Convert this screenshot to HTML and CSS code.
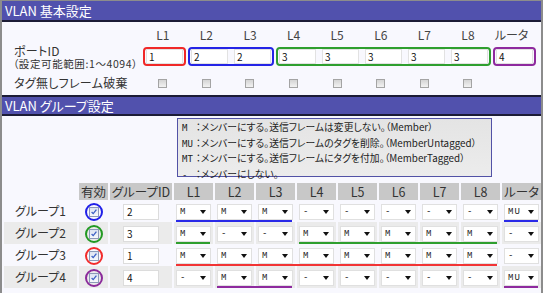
FILE: index.html
```html
<!DOCTYPE html>
<html lang="ja">
<head>
    <meta charset="UTF-8">
    <meta name="viewport" content="width=device-width, initial-scale=1.0">
    <title>VLAN設定</title>
    <link rel="stylesheet" href="styles.css">
</head>
<body>
    <div class="frame">
        <div class="bar">VLAN 基本設定</div>
        <div class="basic">
            <div></div>
            <div class="lbl">L1</div>
            <div class="lbl">L2</div>
            <div class="lbl">L3</div>
            <div class="lbl">L4</div>
            <div class="lbl">L5</div>
            <div class="lbl">L6</div>
            <div class="lbl">L7</div>
            <div class="lbl">L8</div>
            <div class="lbl">ルータ</div>

            <div class="name">ポートID<small>（設定可能範囲:1～4094）</small></div>
            <div class="ports">
                <div class="grp red"><span class="inp">1</span></div>
                <div class="grp blue"><span class="inp">2</span><span class="inp">2</span></div>
                <div class="grp green"><span class="inp">3</span><span class="inp">3</span><span class="inp">3</span><span class="inp">3</span><span class="inp">3</span></div>
                <div class="grp purple"><span class="inp">4</span></div>
            </div>

            <div class="name tag">タグ無しフレーム破棄</div>
            <span class="cb"></span>
            <span class="cb"></span>
            <span class="cb"></span>
            <span class="cb"></span>
            <span class="cb"></span>
            <span class="cb"></span>
            <span class="cb"></span>
            <span class="cb"></span>
            <span></span>
        </div>

        <div class="bar bar2">VLAN グループ設定</div>
        <div class="groups">
            <div class="legend">
                <div><span class="k">M</span>：メンバーにする。送信フレームは変更しない。（Member）</div>
                <div><span class="k">MU</span>：メンバーにする。送信フレームのタグを削除。（MemberUntagged）</div>
                <div><span class="k">MT</span>：メンバーにする。送信フレームにタグを付加。（MemberTagged）</div>
                <div><span class="k">-</span>：メンバーにしない。</div>
            </div>

            <div class="r head">
                <div class="c blank"></div>
                <div class="c">有効</div>
                <div class="c">グループID</div>
                <div class="c">L1</div>
                <div class="c">L2</div>
                <div class="c">L3</div>
                <div class="c">L4</div>
                <div class="c">L5</div>
                <div class="c">L6</div>
                <div class="c">L7</div>
                <div class="c">L8</div>
                <div class="c">ルータ</div>
            </div>

            <!-- グループ1 -->
            <div class="r">
                <div class="c gname">グループ1</div>
                <div class="c"><span class="ring blue"><span class="ck"><svg viewBox="0 0 10 10"><path d="M2 5l2 2 4-5"/></svg></span></span></div>
                <div class="c"><span class="gid">2</span></div>
                <div class="c"><span class="sel">M</span></div>
                <div class="c"><span class="sel">M</span></div>
                <div class="c"><span class="sel">M</span></div>
                <div class="c"><span class="sel">-</span></div>
                <div class="c"><span class="sel">-</span></div>
                <div class="c"><span class="sel">-</span></div>
                <div class="c"><span class="sel">-</span></div>
                <div class="c"><span class="sel">-</span></div>
                <div class="c"><span class="sel">MU</span></div>
                <div class="ln blue l1-3"></div>
                <div class="ln blue lr"></div>
            </div>

            <!-- グループ2 -->
            <div class="r alt">
                <div class="c gname">グループ2</div>
                <div class="c"><span class="ring green"><span class="ck"><svg viewBox="0 0 10 10"><path d="M2 5l2 2 4-5"/></svg></span></span></div>
                <div class="c"><span class="gid">3</span></div>
                <div class="c"><span class="sel">M</span></div>
                <div class="c"><span class="sel">-</span></div>
                <div class="c"><span class="sel">-</span></div>
                <div class="c"><span class="sel">M</span></div>
                <div class="c"><span class="sel">M</span></div>
                <div class="c"><span class="sel">M</span></div>
                <div class="c"><span class="sel">M</span></div>
                <div class="c"><span class="sel">M</span></div>
                <div class="c"><span class="sel">-</span></div>
                <div class="ln green l1"></div>
                <div class="ln green l4-8"></div>
            </div>

            <!-- グループ3 -->
            <div class="r">
                <div class="c gname">グループ3</div>
                <div class="c"><span class="ring red"><span class="ck"><svg viewBox="0 0 10 10"><path d="M2 5l2 2 4-5"/></svg></span></span></div>
                <div class="c"><span class="gid">1</span></div>
                <div class="c"><span class="sel">M</span></div>
                <div class="c"><span class="sel">M</span></div>
                <div class="c"><span class="sel">M</span></div>
                <div class="c"><span class="sel">M</span></div>
                <div class="c"><span class="sel">M</span></div>
                <div class="c"><span class="sel">M</span></div>
                <div class="c"><span class="sel">M</span></div>
                <div class="c"><span class="sel">M</span></div>
                <div class="c"><span class="sel">-</span></div>
                <div class="ln red l1-8"></div>
            </div>

            <!-- グループ4 -->
            <div class="r alt">
                <div class="c gname">グループ4</div>
                <div class="c"><span class="ring purple"><span class="ck"><svg viewBox="0 0 10 10"><path d="M2 5l2 2 4-5"/></svg></span></span></div>
                <div class="c"><span class="gid">4</span></div>
                <div class="c"><span class="sel">-</span></div>
                <div class="c"><span class="sel">M</span></div>
                <div class="c"><span class="sel">M</span></div>
                <div class="c"><span class="sel">-</span></div>
                <div class="c"><span class="sel">-</span></div>
                <div class="c"><span class="sel">-</span></div>
                <div class="c"><span class="sel">-</span></div>
                <div class="c"><span class="sel">-</span></div>
                <div class="c"><span class="sel">MU</span></div>
                <div class="ln purple l2-3"></div>
                <div class="ln purple lr"></div>
            </div>
        </div>
    </div>
</body>
</html>
```

FILE: styles.css
```css
body {
    margin: 0;
    background-color: #fff;
    color: #333;
    font-family: "Noto Sans CJK JP", sans-serif;
    font-feature-settings: "palt";
}
.frame {
    width: 539px;
    height: 292px;
    border: 2px solid #8c8c8c;
    border-top-width: 1px;
    border-bottom: none;
    background-color: #f8f8fe;
    overflow: hidden;
}
.bar {
    height: 19px;
    line-height: 19px;
    padding-left: 3px;
    background-color: #5151ad;
    color: #fff;
    font-size: 13px;
    border-bottom: 2px solid #1c1c36;
}
.bar2 {
    height: 17px;
    line-height: 17px;
    border-top: 2px solid #1c1c36;
}

/* basic settings */
.basic {
    display: grid;
    grid-template-columns: 139px repeat(9, 43.6px);
    grid-template-rows: 14px 28px 25px;
    padding-top: 6px;
    height: 67px;
}
.lbl {
    text-align: center;
    font-size: 12px;
    line-height: 14px;
    color: #444;
}
.name {
    padding-left: 12px;
    font-size: 12px;
    line-height: 13px;
    margin-top: 2px;
    letter-spacing: 0.3px;
}
.name small {
    display: block;
    margin: 1px 0 0 -1px;
    font-size: 10.5px;
    line-height: 11px;
    letter-spacing: 0.6px;
}
.name.tag {
    margin-top: 0;
    align-self: center;
    font-size: 12px;
}
.ports {
    grid-column: 2 / -1;
    display: flex;
    gap: 2px;
    margin: 5px 0 0 2px;
    align-self: start;
}
.grp {
    display: flex;
    gap: 6px;
    padding: 0 1px;
    border: 2px solid;
    border-radius: 4px;
}
.grp.red { border-color: #f02828; }
.grp.blue { border-color: #2424e6; }
.grp.green { border-color: #2f9f2f; }
.grp.purple { border-color: #8e2a9e; }
.inp {
    box-sizing: border-box;
    width: 37px;
    height: 15px;
    padding-left: 2px;
    border: 1px solid #e2e2e2;
    background-color: #fff;
    font-size: 10px;
    line-height: 13px;
    color: #111;
}
.cb {
    justify-self: center;
    align-self: center;
    box-sizing: border-box;
    width: 9px;
    height: 9px;
    margin-top: 2px;
    border: 1px solid #a4a4a4;
    background: linear-gradient(#d4d4d4, #f2f2f2);
}

/* group settings */
.groups {
    padding-left: 2px;
}
.legend {
    box-sizing: border-box;
    width: 315px;
    height: 59px;
    margin: 2px 0 0 173px;
    padding: 1px 0 0 4px;
    border: 1px solid #5252a6;
    background: linear-gradient(#e4e4e4, #ececec);
    font-size: 9.8px;
    line-height: 14.5px;
    white-space: nowrap;
    color: #222;
}
.legend .k {
    display: inline-block;
    width: 14px;
    font-family: "DejaVu Sans Mono", monospace;
    font-size: 9px;
}
.r {
    display: grid;
    grid-template-columns: 73px 29px 62px repeat(9, 39px);
    column-gap: 2px;
    height: 22px;
}
.r > * { grid-row: 1; }
.r > :nth-child(1) { grid-column: 1; }
.r > :nth-child(2) { grid-column: 2; }
.r > :nth-child(3) { grid-column: 3; }
.r > :nth-child(4) { grid-column: 4; }
.r > :nth-child(5) { grid-column: 5; }
.r > :nth-child(6) { grid-column: 6; }
.r > :nth-child(7) { grid-column: 7; }
.r > :nth-child(8) { grid-column: 8; }
.r > :nth-child(9) { grid-column: 9; }
.r > :nth-child(10) { grid-column: 10; }
.r > :nth-child(11) { grid-column: 11; }
.r > :nth-child(12) { grid-column: 12; }
.r.head {
    height: 17px;
    margin-top: 6px;
}
.head .c {
    background-color: #c8c8c8;
    text-align: center;
    font-size: 12.5px;
    line-height: 17px;
    color: #333;
}
.head .c.blank { background: none; }
.alt .c { background-color: #ebebeb; }
.c {
    display: flex;
    justify-content: center;
}
.gname {
    font-size: 12px;
    line-height: 22px;
}
.ring {
    box-sizing: border-box;
    width: 18px;
    height: 18px;
    margin-top: 3px;
    border: 2px solid;
    border-radius: 50%;
    display: flex;
    align-items: center;
    justify-content: center;
}
.ring.blue { border-color: #2020e8; }
.ring.green { border-color: #229922; }
.ring.red { border-color: #f22c2c; }
.ring.purple { border-color: #8a2a9a; }
.ck {
    box-sizing: border-box;
    width: 10px;
    height: 10px;
    border: 1px solid #8c9ab8;
    background: linear-gradient(#dde4f2, #f6f8fc);
    display: flex;
}
.ck svg {
    width: 8px;
    height: 8px;
    fill: none;
    stroke: #3b5fc4;
    stroke-width: 1.6;
}
.gid {
    box-sizing: border-box;
    width: 36px;
    height: 16px;
    margin-top: 4px;
    padding-left: 3px;
    border: 1px solid #dcdcdc;
    background-color: #fff;
    font-size: 10px;
    line-height: 14px;
    color: #111;
}
.sel {
    box-sizing: border-box;
    width: 35px;
    height: 16px;
    margin-top: 4px;
    padding: 0 4px 0 3px;
    border: 1px solid #e0e0e0;
    background-color: #fff;
    display: flex;
    align-items: center;
    justify-content: space-between;
    font-family: "Liberation Mono", monospace;
    font-size: 9px;
    letter-spacing: 1px;
    color: #222;
}
.sel::after {
    content: "";
    border-left: 3.5px solid transparent;
    border-right: 3.5px solid transparent;
    border-top: 4px solid #111;
}
.ln {
    align-self: end;
    height: 2px;
    margin: 0 3px 0 2px;
}
.ln.blue { background-color: #2a2ae8; }
.ln.green { background-color: #2f9f2f; }
.ln.red { background-color: #f23434; }
.ln.purple { background-color: #8e2a9e; }
.r > .l1 { grid-column: 4; }
.r > .l1-3 { grid-column: 4 / 7; }
.r > .l1-8 { grid-column: 4 / 12; }
.r > .l2-3 { grid-column: 5 / 7; }
.r > .l4-8 { grid-column: 7 / 12; }
.r > .lr { grid-column: 12; }
```
